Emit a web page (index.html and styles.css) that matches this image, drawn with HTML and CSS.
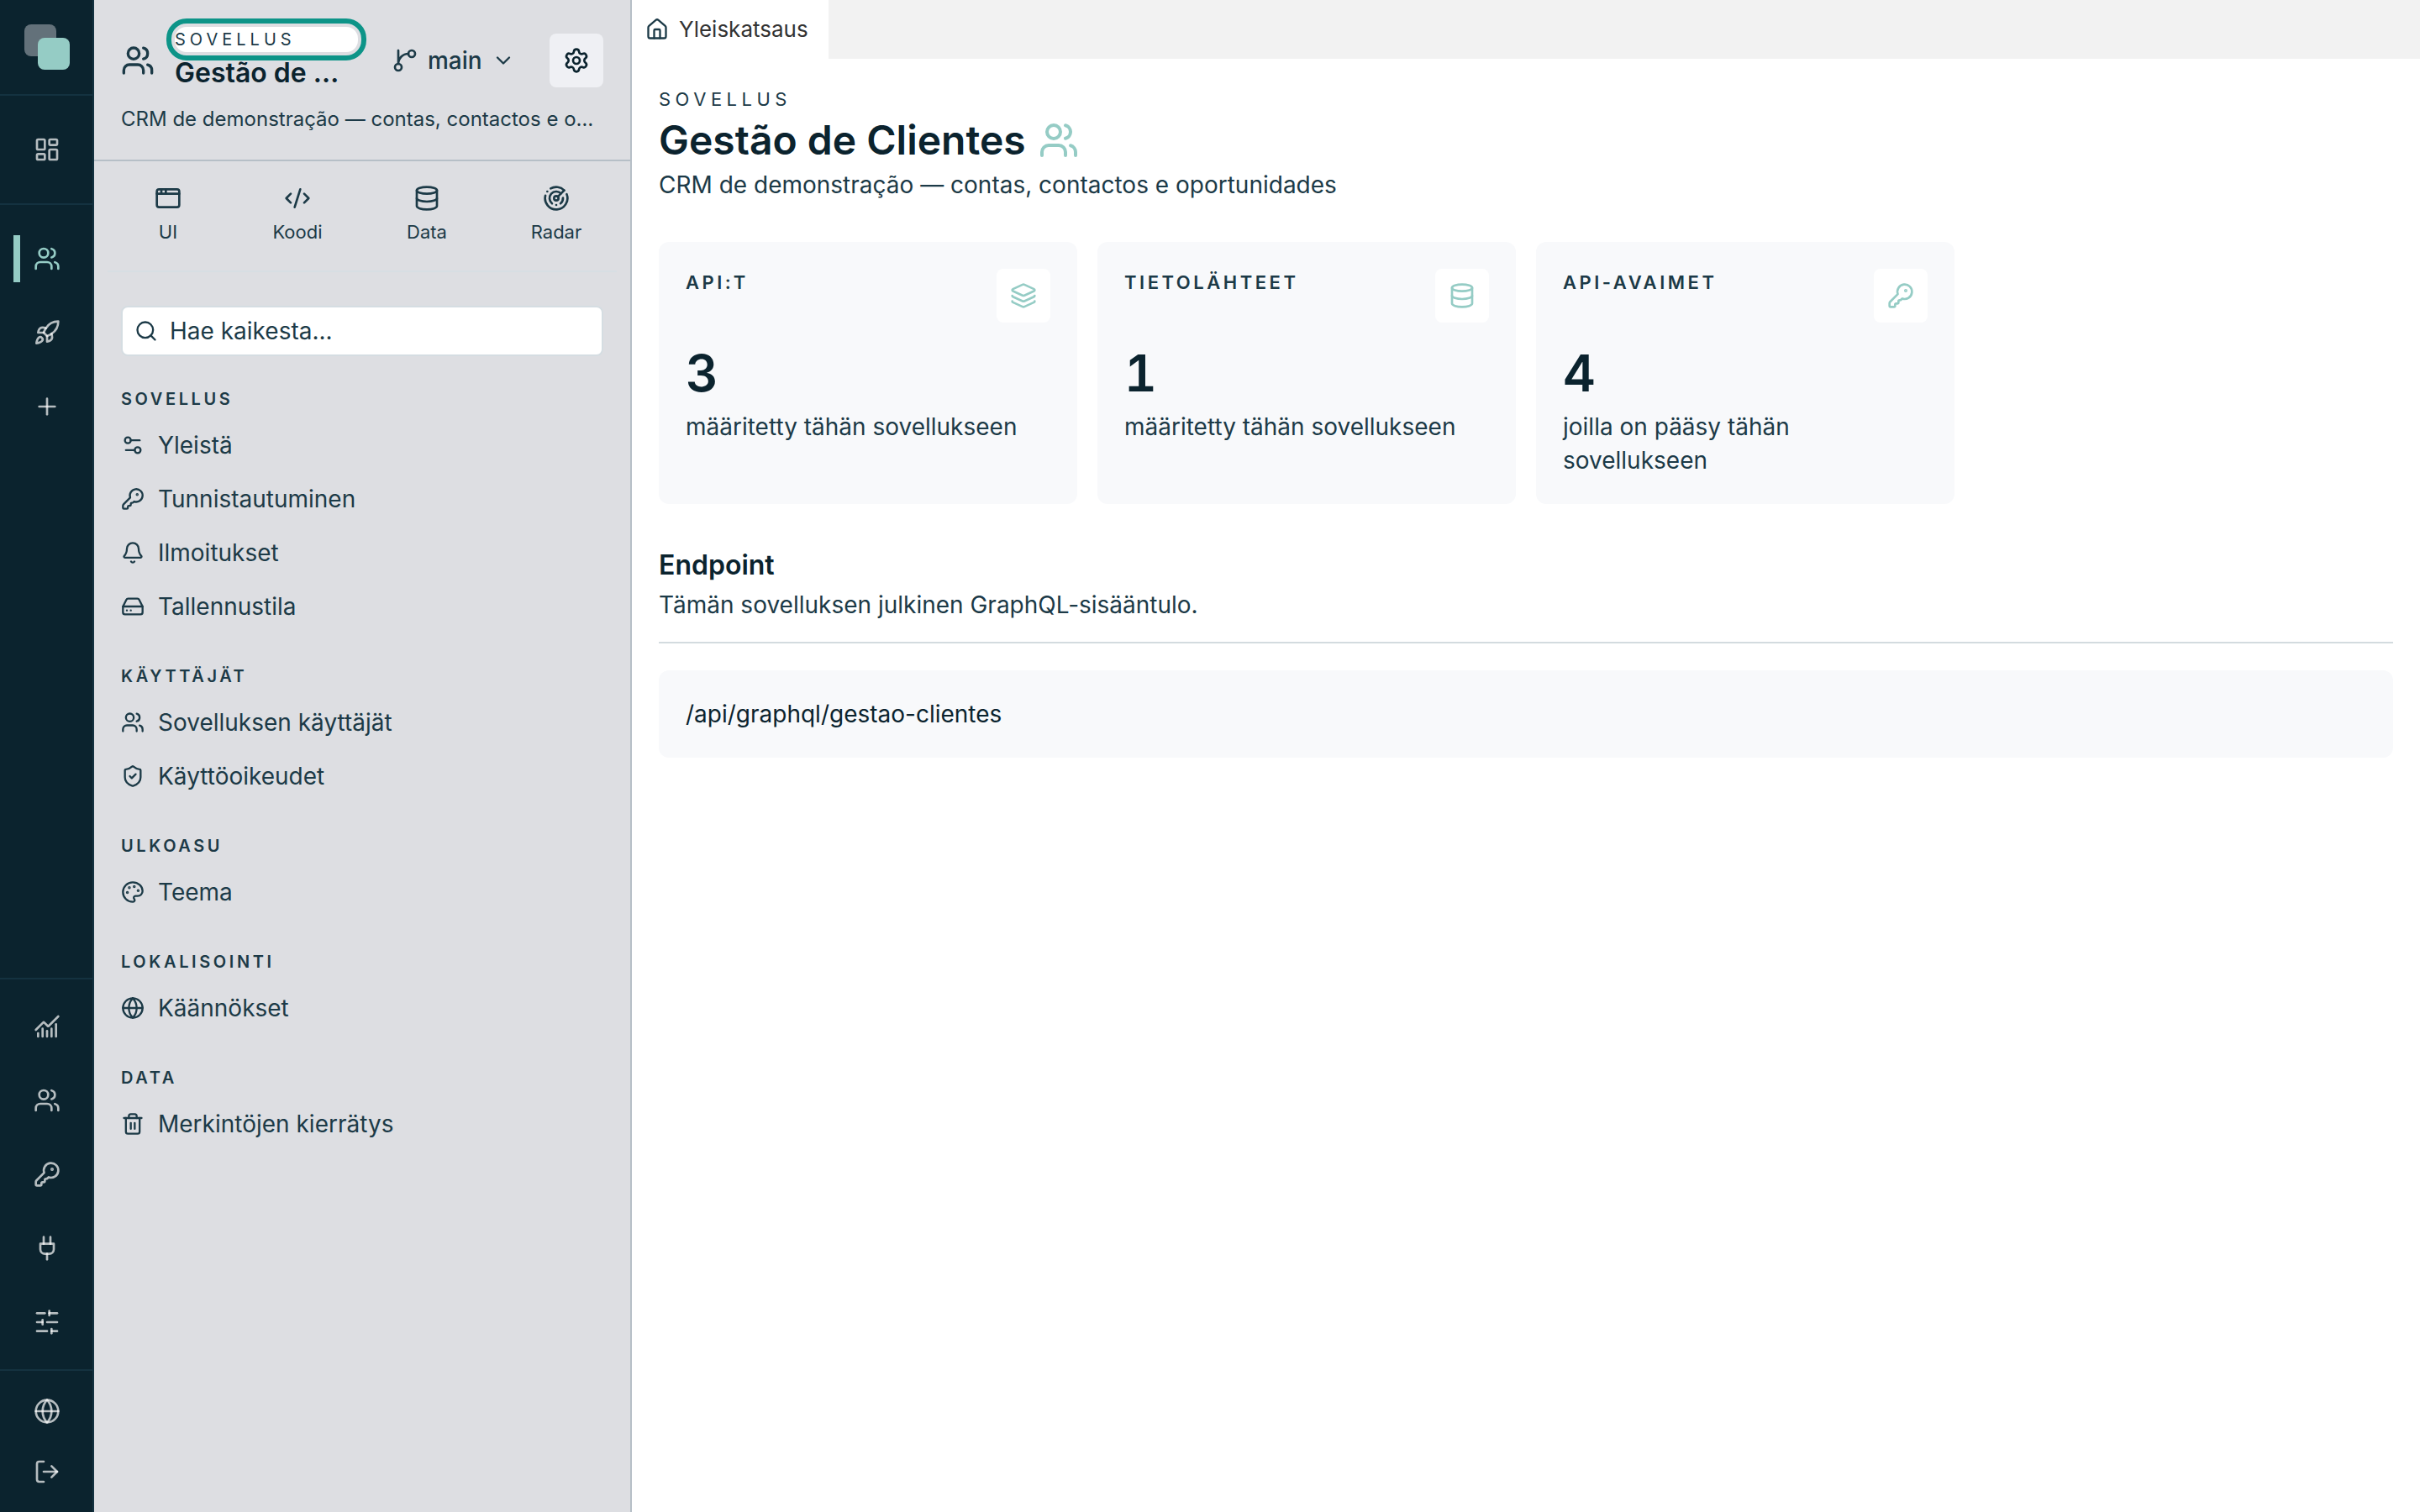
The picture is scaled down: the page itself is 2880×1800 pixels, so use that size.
FILE: index.html
```html
<!DOCTYPE html>
<html lang="fi">
<head>
  <meta charset="UTF-8" />
  <meta name="viewport" content="width=device-width, initial-scale=1.0"/>
  <title>Gestão de Clientes</title>
  <link rel="stylesheet" href="styles.css">
</head>
<body>
  <!-- icon set -->
  <svg class="sprite" width="0" height="0">
    <symbol id="i-dashboard" viewBox="0 0 24 24"><rect width="7" height="9" x="3" y="3" rx="1"/><rect width="7" height="5" x="14" y="3" rx="1"/><rect width="7" height="9" x="14" y="12" rx="1"/><rect width="7" height="5" x="3" y="16" rx="1"/></symbol>
    <symbol id="i-users" viewBox="0 0 24 24"><path d="M16 21v-2a4 4 0 0 0-4-4H6a4 4 0 0 0-4 4v2"/><circle cx="9" cy="7" r="4"/><path d="M22 21v-2a4 4 0 0 0-3-3.87"/><path d="M16 3.13a4 4 0 0 1 0 7.75"/></symbol>
    <symbol id="i-rocket" viewBox="0 0 24 24"><path d="M4.5 16.5c-1.5 1.26-2 5-2 5s3.74-.5 5-2c.71-.84.7-2.13-.09-2.91a2.18 2.18 0 0 0-2.91-.09z"/><path d="m12 15-3-3a22 22 0 0 1 2-3.95A12.88 12.88 0 0 1 22 2c0 2.72-.78 7.5-6 11a22.35 22.35 0 0 1-4 2z"/><path d="M9 12H4s.55-3.03 2-4c1.62-1.08 5 0 5 0"/><path d="M12 15v5s3.03-.55 4-2c1.08-1.62 0-5 0-5"/></symbol>
    <symbol id="i-plus" viewBox="0 0 24 24"><path d="M5 12h14"/><path d="M12 5v14"/></symbol>
    <symbol id="i-chart" viewBox="0 0 24 24"><path d="M12 16v5"/><path d="M16 14v7"/><path d="M20 10v11"/><path d="m22 3-8.646 8.646a.5.5 0 0 1-.708 0L9.354 8.354a.5.5 0 0 0-.707 0L2 15"/><path d="M4 18v3"/><path d="M8 14v7"/></symbol>
    <symbol id="i-key" viewBox="0 0 24 24"><path d="M2.586 17.414A2 2 0 0 0 2 18.828V21a1 1 0 0 0 1 1h3a1 1 0 0 0 1-1v-1a1 1 0 0 1 1-1h1a1 1 0 0 0 1-1v-1a1 1 0 0 1 1-1h.172a2 2 0 0 0 1.414-.586l.814-.814a6.5 6.5 0 1 0-4-4z"/><circle cx="16.5" cy="7.5" r=".5" fill="currentColor"/></symbol>
    <symbol id="i-plug" viewBox="0 0 24 24"><path d="M12 22v-5"/><path d="M9 8V2"/><path d="M15 8V2"/><path d="M18 8v5a4 4 0 0 1-4 4h-4a4 4 0 0 1-4-4V8Z"/></symbol>
    <symbol id="i-sliders" viewBox="0 0 24 24"><path d="M21 4h-7"/><path d="M10 4H3"/><path d="M21 12h-9"/><path d="M8 12H3"/><path d="M21 20h-5"/><path d="M12 20H3"/><path d="M14 2v4"/><path d="M8 10v4"/><path d="M16 18v4"/></symbol>
    <symbol id="i-globe" viewBox="0 0 24 24"><circle cx="12" cy="12" r="10"/><path d="M12 2a14.5 14.5 0 0 0 0 20 14.5 14.5 0 0 0 0-20"/><path d="M2 12h20"/></symbol>
    <symbol id="i-logout" viewBox="0 0 24 24"><path d="M9 21H5a2 2 0 0 1-2-2V5a2 2 0 0 1 2-2h4"/><path d="m16 17 5-5-5-5"/><path d="M21 12H9"/></symbol>
    <symbol id="i-branch" viewBox="0 0 24 24"><path d="M15 6a9 9 0 0 0-9 9V3"/><circle cx="18" cy="6" r="3"/><circle cx="6" cy="18" r="3"/></symbol>
    <symbol id="i-chevron" viewBox="0 0 24 24"><path d="m6 9 6 6 6-6"/></symbol>
    <symbol id="i-settings" viewBox="0 0 24 24"><path d="M9.671 4.136a2.34 2.34 0 0 1 4.659 0 2.34 2.34 0 0 0 3.319 1.915 2.34 2.34 0 0 1 2.33 4.033 2.34 2.34 0 0 0 0 3.831 2.34 2.34 0 0 1-2.33 4.033 2.34 2.34 0 0 0-3.319 1.915 2.34 2.34 0 0 1-4.659 0 2.34 2.34 0 0 0-3.32-1.915 2.34 2.34 0 0 1-2.33-4.033 2.34 2.34 0 0 0 0-3.831A2.34 2.34 0 0 1 6.35 6.051a2.34 2.34 0 0 0 3.319-1.915"/><circle cx="12" cy="12" r="3"/></symbol>
    <symbol id="i-window" viewBox="0 0 24 24"><rect x="2" y="4" width="20" height="16" rx="2"/><path d="M10 4v4"/><path d="M2 8h20"/><path d="M6 4v4"/></symbol>
    <symbol id="i-code" viewBox="0 0 24 24"><path d="m18 16 4-4-4-4"/><path d="m6 8-4 4 4 4"/><path d="m14.5 4-5 16"/></symbol>
    <symbol id="i-database" viewBox="0 0 24 24"><ellipse cx="12" cy="5" rx="9" ry="3"/><path d="M3 5V19A9 3 0 0 0 21 19V5"/><path d="M3 12A9 3 0 0 0 21 12"/></symbol>
    <symbol id="i-radar" viewBox="0 0 24 24"><path d="M19.07 4.93A10 10 0 0 0 6.99 3.34"/><path d="M4 6h.01"/><path d="M2.29 9.62A10 10 0 1 0 21.31 8.35"/><path d="M16.24 7.76A6 6 0 1 0 8.23 16.67"/><path d="M12 18h.01"/><path d="M17.99 11.66A6 6 0 0 1 15.77 16.67"/><circle cx="12" cy="12" r="2"/><path d="m13.41 10.59 5.66-5.66"/></symbol>
    <symbol id="i-search" viewBox="0 0 24 24"><path d="m21 21-4.34-4.34"/><circle cx="11" cy="11" r="8"/></symbol>
    <symbol id="i-general" viewBox="0 0 24 24"><path d="M14 17H5"/><path d="M19 7h-9"/><circle cx="17" cy="17" r="3"/><circle cx="7" cy="7" r="3"/></symbol>
    <symbol id="i-bell" viewBox="0 0 24 24"><path d="M10.268 21a2 2 0 0 0 3.464 0"/><path d="M3.262 15.326A1 1 0 0 0 4 17h16a1 1 0 0 0 .74-1.673C19.41 13.956 18 12.499 18 8A6 6 0 0 0 6 8c0 4.499-1.411 5.956-2.738 7.326"/></symbol>
    <symbol id="i-drive" viewBox="0 0 24 24"><path d="M22 12H2"/><path d="M5.45 5.11 2 12v6a2 2 0 0 0 2 2h16a2 2 0 0 0 2-2v-6l-3.45-6.89A2 2 0 0 0 16.76 4H7.24a2 2 0 0 0-1.79 1.11z"/><path d="M6 16h.01"/><path d="M10 16h.01"/></symbol>
    <symbol id="i-shield" viewBox="0 0 24 24"><path d="M20 13c0 5-3.5 7.5-7.66 8.95a1 1 0 0 1-.67-.01C7.5 20.5 4 18 4 13V6a1 1 0 0 1 1-1c2 0 4.5-1.2 6.24-2.72a1.17 1.17 0 0 1 1.52 0C14.51 3.81 17 5 19 5a1 1 0 0 1 1 1z"/><path d="m9 12 2 2 4-4"/></symbol>
    <symbol id="i-palette" viewBox="0 0 24 24"><path d="M12 22a1 1 0 0 1 0-20 10 9 0 0 1 10 9 5 5 0 0 1-5 5h-2.25a1.75 1.75 0 0 0-1.4 2.8l.3.4a1.75 1.75 0 0 1-1.4 2.8z"/><circle cx="13.5" cy="6.5" r=".5" fill="currentColor"/><circle cx="17.5" cy="10.5" r=".5" fill="currentColor"/><circle cx="6.5" cy="12.5" r=".5" fill="currentColor"/><circle cx="8.5" cy="7.5" r=".5" fill="currentColor"/></symbol>
    <symbol id="i-trash" viewBox="0 0 24 24"><path d="M10 11v6"/><path d="M14 11v6"/><path d="M19 6v14a2 2 0 0 1-2 2H7a2 2 0 0 1-2-2V6"/><path d="M3 6h18"/><path d="M8 6V4a2 2 0 0 1 2-2h4a2 2 0 0 1 2 2v2"/></symbol>
    <symbol id="i-home" viewBox="0 0 24 24"><path d="M15 21v-8a1 1 0 0 0-1-1h-4a1 1 0 0 0-1 1v8"/><path d="M3 10a2 2 0 0 1 .709-1.528l7-6a2 2 0 0 1 2.582 0l7 6A2 2 0 0 1 21 10v9a2 2 0 0 1-2 2H5a2 2 0 0 1-2-2z"/></symbol>
    <symbol id="i-layers" viewBox="0 0 24 24"><path d="M12.83 2.18a2 2 0 0 0-1.66 0L2.6 6.08a1 1 0 0 0 0 1.83l8.58 3.91a2 2 0 0 0 1.66 0l8.58-3.9a1 1 0 0 0 0-1.83z"/><path d="M2 12a1 1 0 0 0 .58.91l8.6 3.91a2 2 0 0 0 1.65 0l8.58-3.9A1 1 0 0 0 22 12"/><path d="M2 17a1 1 0 0 0 .58.91l8.6 3.91a2 2 0 0 0 1.65 0l8.58-3.9A1 1 0 0 0 22 17"/></symbol>
  </svg>

  <div class="app">
    <nav class="rail">
      <div class="rail-logo">
        <div class="logo"><span class="logo-back"></span><span class="logo-front"></span></div>
      </div>
      <div class="rail-group rail-home">
        <a class="rail-item"><svg class="icon"><use href="#i-dashboard"/></svg></a>
      </div>
      <div class="rail-group rail-apps">
        <a class="rail-item active"><svg class="icon"><use href="#i-users"/></svg></a>
        <a class="rail-item"><svg class="icon"><use href="#i-rocket"/></svg></a>
        <a class="rail-item"><svg class="icon"><use href="#i-plus"/></svg></a>
      </div>
      <div class="rail-group rail-admin">
        <a class="rail-item"><svg class="icon"><use href="#i-chart"/></svg></a>
        <a class="rail-item"><svg class="icon"><use href="#i-users"/></svg></a>
        <a class="rail-item"><svg class="icon"><use href="#i-key"/></svg></a>
        <a class="rail-item"><svg class="icon"><use href="#i-plug"/></svg></a>
        <a class="rail-item"><svg class="icon"><use href="#i-sliders"/></svg></a>
      </div>
      <div class="rail-group rail-user">
        <a class="rail-item"><svg class="icon"><use href="#i-globe"/></svg></a>
        <a class="rail-item"><svg class="icon"><use href="#i-logout"/></svg></a>
      </div>
    </nav>

    <aside class="sidebar">
      <header class="side-header">
        <div class="side-top">
          <svg class="icon icon-app"><use href="#i-users"/></svg>
          <div class="side-title">
            <div class="side-kicker">SOVELLUS</div>
            <div class="side-name">Gestão de Clientes</div>
          </div>
          <button class="branch">
            <svg class="icon"><use href="#i-branch"/></svg>
            <span>main</span>
            <svg class="icon icon-sm"><use href="#i-chevron"/></svg>
          </button>
          <button class="settings"><svg class="icon"><use href="#i-settings"/></svg></button>
        </div>
        <p class="side-desc">CRM de demonstração — contas, contactos e oportunidades</p>
      </header>

      <div class="tools">
        <a class="tool"><svg class="icon"><use href="#i-window"/></svg><span>UI</span></a>
        <a class="tool"><svg class="icon"><use href="#i-code"/></svg><span>Koodi</span></a>
        <a class="tool"><svg class="icon"><use href="#i-database"/></svg><span>Data</span></a>
        <a class="tool"><svg class="icon"><use href="#i-radar"/></svg><span>Radar</span></a>
      </div>

      <div class="search">
        <svg class="icon icon-sm"><use href="#i-search"/></svg>
        <span>Hae kaikesta...</span>
      </div>

      <div class="menu">
        <h3>SOVELLUS</h3>
        <a><svg class="icon icon-sm"><use href="#i-general"/></svg>Yleistä</a>
        <a><svg class="icon icon-sm"><use href="#i-key"/></svg>Tunnistautuminen</a>
        <a><svg class="icon icon-sm"><use href="#i-bell"/></svg>Ilmoitukset</a>
        <a><svg class="icon icon-sm"><use href="#i-drive"/></svg>Tallennustila</a>
        <h3>KÄYTTÄJÄT</h3>
        <a><svg class="icon icon-sm"><use href="#i-users"/></svg>Sovelluksen käyttäjät</a>
        <a><svg class="icon icon-sm"><use href="#i-shield"/></svg>Käyttöoikeudet</a>
        <h3>ULKOASU</h3>
        <a><svg class="icon icon-sm"><use href="#i-palette"/></svg>Teema</a>
        <h3>LOKALISOINTI</h3>
        <a><svg class="icon icon-sm"><use href="#i-globe"/></svg>Käännökset</a>
        <h3>DATA</h3>
        <a><svg class="icon icon-sm"><use href="#i-trash"/></svg>Merkintöjen kierrätys</a>
      </div>
    </aside>

    <main class="main">
      <div class="tabs">
        <div class="tab"><svg class="icon icon-sm"><use href="#i-home"/></svg><span>Yleiskatsaus</span></div>
      </div>

      <div class="content">
        <div class="kicker">SOVELLUS</div>
        <h1>Gestão de Clientes <svg class="icon icon-lg"><use href="#i-users"/></svg></h1>
        <p class="lead">CRM de demonstração — contas, contactos e oportunidades</p>

        <div class="cards">
          <div class="card">
            <div class="card-head"><h4>API:T</h4><span class="tile"><svg class="icon"><use href="#i-layers"/></svg></span></div>
            <div class="number">3</div>
            <p>määritetty tähän sovellukseen</p>
          </div>
          <div class="card">
            <div class="card-head"><h4>TIETOLÄHTEET</h4><span class="tile"><svg class="icon"><use href="#i-database"/></svg></span></div>
            <div class="number">1</div>
            <p>määritetty tähän sovellukseen</p>
          </div>
          <div class="card">
            <div class="card-head"><h4>API-AVAIMET</h4><span class="tile"><svg class="icon"><use href="#i-key"/></svg></span></div>
            <div class="number">4</div>
            <p>joilla on pääsy tähän sovellukseen</p>
          </div>
        </div>

        <section class="endpoint">
          <h2>Endpoint</h2>
          <p>Tämän sovelluksen julkinen GraphQL-sisääntulo.</p>
          <div class="url">/api/graphql/gestao-clientes</div>
        </section>
      </div>
    </main>
  </div>
</body>
</html>
```

FILE: styles.css
```css
* {
  box-sizing: border-box;
}

body {
  margin: 0;
  font-family: Inter, "Liberation Sans", sans-serif;
  font-size: 28px;
  line-height: 40px;
  color: #1c3a47;
  background: #fff;
}

h1, h2, h3, h4, p {
  margin: 0;
}

button {
  font: inherit;
  color: inherit;
  border: none;
  background: none;
  padding: 0;
}

.sprite {
  position: absolute;
}

.icon {
  width: 32px;
  height: 32px;
  flex-shrink: 0;
  fill: none;
  stroke: currentColor;
  stroke-width: 2;
  stroke-linecap: round;
  stroke-linejoin: round;
}

.icon-sm {
  width: 28px;
  height: 28px;
}

.icon-app {
  width: 40px;
  height: 40px;
}

.icon-lg {
  width: 48px;
  height: 48px;
}

.app {
  display: flex;
  height: 100vh;
}

/* left rail */
.rail {
  width: 112px;
  flex-shrink: 0;
  display: flex;
  flex-direction: column;
  background: #0b232e;
  border-right: 2px solid #143240;
  color: rgba(255, 255, 255, 0.7);
}

.rail-logo {
  height: 114px;
  padding: 29px;
  border-bottom: 2px solid #143240;
}

.logo {
  position: relative;
  width: 54px;
  height: 54px;
}

.logo span {
  position: absolute;
  width: 38px;
  height: 38px;
  border-radius: 8px;
}

.logo-back {
  left: 0;
  top: 0;
  background: #63717a;
}

.logo-front {
  right: 0;
  bottom: 0;
  background: #95ccc5;
}

.rail-home {
  padding: 20px 0;
  border-bottom: 2px solid #143240;
}

.rail-apps {
  padding: 20px 0;
  flex: 1;
}

.rail-admin,
.rail-user {
  padding: 12px 0;
  border-top: 2px solid #143240;
}

.rail-item {
  position: relative;
  width: 112px;
  height: 88px;
  display: flex;
  align-items: center;
  justify-content: center;
}

.rail-user .rail-item {
  height: 72px;
}

.rail-item.active {
  color: #95ccc5;
}

.rail-item.active::before {
  content: "";
  position: absolute;
  left: 16px;
  top: 16px;
  width: 8px;
  height: 56px;
  background: #95ccc5;
}

/* sidebar */
.sidebar {
  width: 640px;
  flex-shrink: 0;
  background: #dddee2;
  border-right: 2px solid #b6bfc7;
}

.side-header {
  height: 192px;
  padding: 32px 32px 0;
  border-bottom: 2px solid #b6bfc7;
}

.side-top {
  display: flex;
  align-items: center;
  height: 80px;
}

.side-title {
  width: 218px;
  margin-left: 24px;
  margin-right: 40px;
  align-self: flex-start;
}

.side-kicker {
  height: 30px;
  font-size: 20px;
  line-height: 30px;
  letter-spacing: 5px;
  background: #fff;
  border-radius: 14px;
  outline: 6px solid #0d9488;
  outline-offset: 4px;
}

.side-name {
  font-size: 32px;
  line-height: 50px;
  font-weight: 600;
  color: #0b232e;
  white-space: nowrap;
  overflow: hidden;
  text-overflow: ellipsis;
}

.branch {
  display: flex;
  align-items: center;
  gap: 11px;
  margin-right: auto;
  font-weight: 500;
}

.settings {
  width: 64px;
  height: 64px;
  display: flex;
  align-items: center;
  justify-content: center;
  background: #eff0f4;
  border-radius: 8px;
  color: #0b232e;
}

.side-desc {
  margin-top: 12px;
  font-size: 24px;
  line-height: 36px;
  white-space: nowrap;
  overflow: hidden;
  text-overflow: ellipsis;
}

.tools {
  display: grid;
  grid-template-columns: repeat(4, 1fr);
  gap: 10px;
  height: 132px;
  margin: 0 16px;
  padding-top: 28px;
  border-bottom: 2px solid #d7dee3;
}

.tool {
  display: flex;
  flex-direction: column;
  align-items: center;
  gap: 8px;
  font-size: 22px;
  line-height: 32px;
}

.search {
  display: flex;
  align-items: center;
  gap: 14px;
  height: 60px;
  margin: 40px 32px 0;
  padding: 0 14px;
  background: #fff;
  border: 2px solid #d5dde2;
  border-radius: 8px;
}

.menu {
  padding: 39px 32px 0;
}

.menu h3 {
  height: 24px;
  margin-bottom: 11px;
  font-size: 20px;
  line-height: 24px;
  font-weight: 600;
  letter-spacing: 3.6px;
}

.menu a + h3 {
  margin-top: 39px;
}

.menu a {
  display: flex;
  align-items: center;
  gap: 16px;
  height: 64px;
}

/* main area */
.main {
  flex: 1;
  min-width: 0;
}

.tabs {
  display: flex;
  height: 70px;
  background: #f2f2f2;
}

.tab {
  display: flex;
  align-items: center;
  gap: 12px;
  width: 234px;
  padding-left: 16px;
  background: #fff;
  font-size: 26px;
}

.tab span {
  color: #333;
}

.content {
  padding: 32px;
}

.kicker {
  font-size: 22px;
  line-height: 32px;
  letter-spacing: 5.5px;
}

h1 {
  display: flex;
  align-items: center;
  gap: 15px;
  font-size: 48px;
  line-height: 66px;
  font-weight: 600;
  color: #0b232e;
}

h1 .icon {
  color: #95ccc5;
}

.cards {
  display: grid;
  grid-template-columns: repeat(3, 498px);
  gap: 24px;
  margin-top: 48px;
}

.card {
  height: 312px;
  padding: 32px;
  background: #f8f9fb;
  border-radius: 12px;
}

.card-head {
  display: flex;
  justify-content: space-between;
}

.card h4 {
  font-size: 22px;
  line-height: 32px;
  font-weight: 600;
  letter-spacing: 3.52px;
}

.tile {
  width: 64px;
  height: 64px;
  display: flex;
  align-items: center;
  justify-content: center;
  background: #fff;
  border-radius: 8px;
  color: #95ccc5;
}

.number {
  margin-top: 24px;
  font-size: 60px;
  line-height: 72px;
  font-weight: 600;
  font-variant-numeric: tabular-nums;
  color: #0b232e;
}

.card p {
  margin-top: 8px;
}

.endpoint {
  margin-top: 49px;
}

.endpoint h2 {
  font-size: 32px;
  line-height: 48px;
  font-weight: 600;
  color: #0b232e;
}

.endpoint p {
  margin-top: 3px;
  padding-bottom: 24px;
  border-bottom: 2px solid #d3dbdf;
}

.url {
  margin-top: 32px;
  padding: 32px;
  background: #f8f9fb;
  border-radius: 12px;
  color: #0b232e;
}
```
